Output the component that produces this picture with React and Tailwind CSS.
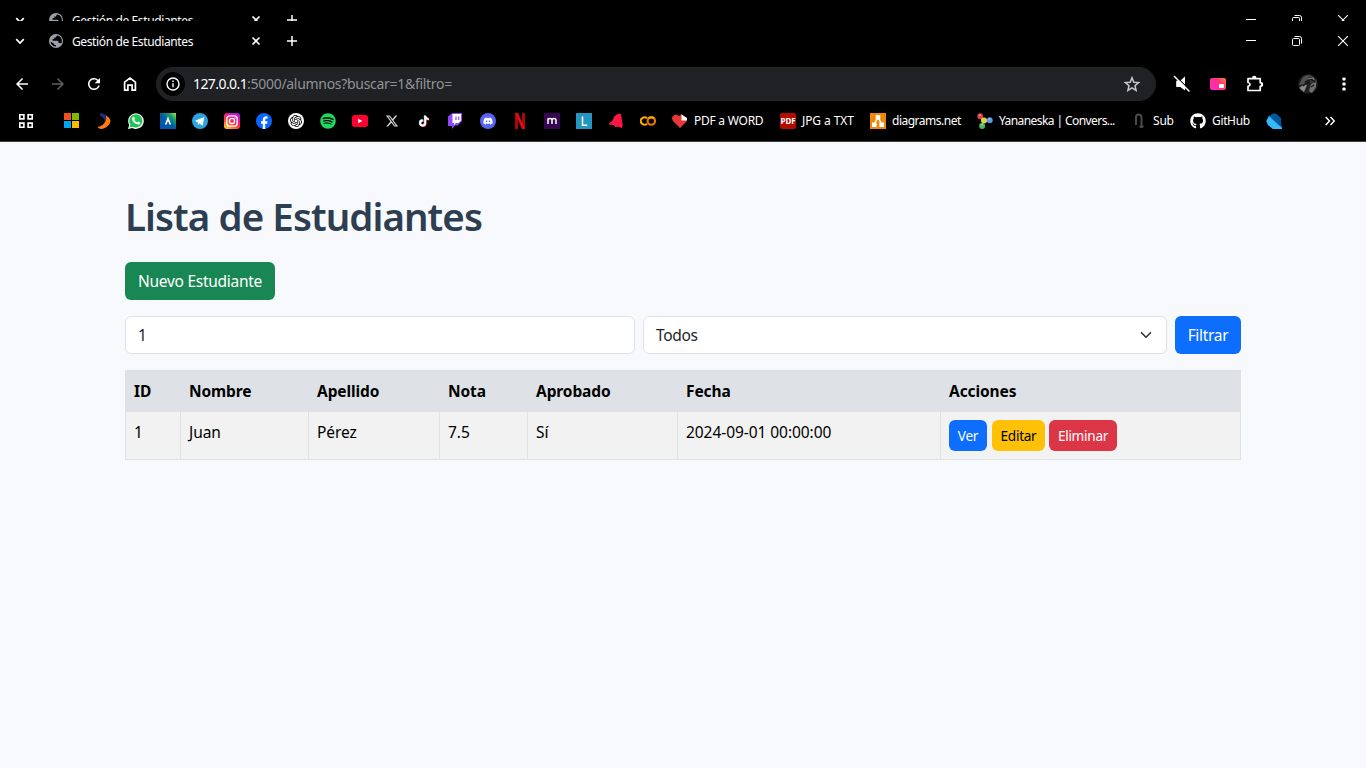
import React from "react";
import { FaSpotify, FaDiscord, FaGithub } from "react-icons/fa";
import { FaXTwitter } from "react-icons/fa6";
import { SiOpenai } from "react-icons/si";
import { MdArrowBack, MdArrowForward, MdRefresh } from "react-icons/md";

function TabStrip() {
  return (
    <div className="flex h-[46px] w-full shrink-0 items-start bg-black text-white">
      <div className="flex h-10 w-full items-center">
        <svg className="ml-[15px] shrink-0" width="10" height="10" viewBox="0 0 10 10" fill="none" stroke="#fff" strokeWidth="1.7"><path d="M1.2 3.2 5 7l3.8-3.8" /></svg>
        <svg className="ml-[24px] shrink-0" width="14" height="14" viewBox="0 0 14 14"><circle cx="7" cy="7" r="7" fill="#9aa0a6" /><path d="M8.500 1.400Q7 2 7 3.400H5.300v1.700H3.600v1.600h4.700q1.200 0 1.200 1.300v1h1.700q.8 0 1.100.6.5-1 .5-2.600a5.700 5.700 0 0 0-4.300-5.600ZM1.500 7.500l3.800 2.600v.9H7v1.600q-4.700 0-5.500-5.100Z" fill="#000" /></svg>
        <span className="ml-[9px] w-[180px] shrink-0 whitespace-nowrap pt-0.5 text-[12px] leading-4 tracking-[-0.38px]">Gestión de Estudiantes</span>
        <svg className="-ml-px shrink-0" width="10" height="10" viewBox="0 0 10 10" stroke="#fff" strokeWidth="1.7"><path d="m1.5 1.5 7 7m0-7-7 7" /></svg>
        <svg className="ml-[26px] shrink-0" width="10" height="10" viewBox="0 0 10 10" stroke="#fff" strokeWidth="1.5"><path d="M5 0v10M0 5h10" /></svg>
        <div className="grow" />
        <svg width="10" height="10" viewBox="0 0 10 10" stroke="#fff"><path d="M0 4.5h10" /></svg>
        <svg className="ml-9" width="10" height="10" viewBox="0 0 10 10" fill="none" stroke="#fff"><rect x=".5" y="2.5" width="7" height="7" rx="1" /><path d="M2.5.5h5q2 0 2 2v5" /></svg>
        <svg className="ml-9 mr-[18px]" width="10" height="10" viewBox="0 0 10 10" stroke="#fff" strokeWidth="1.1"><path d="m0 0 10 10M10 0 0 10" /></svg>
      </div>
    </div>
  );
}

function Toolbar() {
  return (
    <div className="flex h-[34px] shrink-0 items-center">
      <MdArrowBack className="ml-[13px] size-[18px] shrink-0" />
      <MdArrowForward className="ml-[18px] size-[18px] shrink-0 text-[#5f6063]" />
      <MdRefresh className="ml-[18px] size-[18px] shrink-0" />
      <svg className="ml-[18px] shrink-0" width="18" height="18" viewBox="0 0 18 18" fill="none" stroke="#fff" strokeWidth="1.7"><path d="M3.6 15.2V7.1L9 3l5.4 4.1v8.1h-3.3v-5H6.9v5Z" /></svg>
      <div className="ml-[17px] flex h-[34px] w-[1000px] shrink-0 items-center rounded-full bg-[#202124] pl-[5px]">
        <div className="flex size-6 items-center justify-center rounded-full bg-black">
          <svg width="14" height="14" viewBox="0 0 14 14" fill="none" stroke="#fff" strokeWidth="1.4"><circle cx="7" cy="7" r="6" /><path d="M7 6.2v4M7 3.6v1.5" /></svg>
        </div>
        <span className="ml-2 whitespace-nowrap text-[14px] leading-5 tracking-[-0.3px] text-[#8f9398]"><span className="tracking-[-0.58px] text-white">127.0.0.1</span>:5000/alumnos?buscar=1&amp;filtro=</span>
        <svg className="ml-auto mr-[15px]" width="18" height="18" viewBox="0 0 18 18" fill="none" stroke="#c7c8ca" strokeWidth="1.500"><path d="m9 2.800 1.800 4.400 4.800.4-3.600 3.100 1.100 4.700L9 12.900l-4.100 2.500L6 10.700 2.400 7.600l4.800-.4Z" /></svg>
      </div>
      <svg className="ml-[17px] shrink-0" width="18" height="18" viewBox="0 0 18 18" fill="#fff"><path d="M12 1.5v14L7.300 12H3.200V5.800h4.100Z" /><path d="M2.300.7 17.800 16.200" stroke="#000" strokeWidth="1.200" /><path d="m1 1 15.500 15.500" stroke="#fff" strokeWidth="1.500" /></svg>
      <svg className="ml-[19px] shrink-0" width="16" height="12" viewBox="0 0 16 12"><defs><linearGradient id="pip" x1="0" y1=".6" x2="1" y2="0"><stop stopColor="#ff2bbd" /><stop offset=".55" stopColor="#ff347d" /><stop offset="1" stopColor="#fb8b20" /></linearGradient></defs><rect width="16" height="12" rx="2" fill="url(#pip)" /><rect x="9" y="6" width="5" height="4" rx="1" fill="#fff" /></svg>
      <svg className="ml-5 shrink-0" width="18" height="18" viewBox="0 0 18 18"><path d="M2 3.600h12.200v4.100q1.800 0 1.800 1.800t-1.800 1.800v4.200H2v-4.200q2-.3 2-1.900T2 7.500Z" fill="none" stroke="#fff" strokeWidth="1.700" strokeLinejoin="round" /><path d="M6 3a2.200 2.200 0 0 1 4.400 0ZM15 7.200a2 2 0 0 1 0 4.400Z" fill="#fff" /></svg>
      <svg className="ml-[34px] shrink-0" width="20" height="20" viewBox="0 0 20 20"><defs><clipPath id="av"><circle cx="10" cy="10" r="9.800" /></clipPath></defs><g clipPath="url(#av)"><path d="M0 0h20v20H0Z" fill="#202020" /><path d="M5 3q6-4 10 0l3 4-5-2-4 1-3 4-5 1Z" fill="#505050" /><path d="m1 14 6-4 2 1-3 7Z" fill="#8a8a8a" /><path d="m10 3 5-1 4 5-1 5-3 1-1-4-5-1Z" fill="#383838" /><path d="m13 10 5-2v5l-4 6-3-2Z" fill="#6f6f6f" /><path d="m7 8 6-3 4 3M5 12l7-5m1 6 3-2" stroke="#151515" strokeWidth="1.200" fill="none" /><path d="m10 5 5-1 1 2" stroke="#999" strokeWidth=".8" fill="none" /></g></svg>
      <svg className="ml-[24px] shrink-0" width="4" height="14" viewBox="0 0 4 14" fill="#fff"><rect x=".4" y=".4" width="3.2" height="3.2" rx="1.2" /><rect x=".4" y="5.4" width="3.2" height="3.2" rx="1.2" /><rect x=".4" y="10.4" width="3.2" height="3.2" rx="1.2" /></svg>
    </div>
  );
}

function Bookmarks() {
  return (
    <div className="flex h-[41px] shrink-0 items-center border-b border-[#3c3c3f] text-[12px] leading-4">
      <svg className="ml-[19px] shrink-0" width="14" height="14" viewBox="0 0 14 14" fill="none" stroke="#fff" strokeWidth="1.6"><path d="M.8.8h4.1v4.1H.8ZM9.1.8h4.1v4.1H9.1ZM.8 9.1h4.1v4.1H.8ZM9.1 9.1h4.1v4.1H9.1Z" /></svg>
      <div className="ml-[31px] flex shrink-0 items-center gap-4 [&>svg]:size-4 [&>svg]:shrink-0">
        <svg viewBox="0 0 16 16"><path d="M0 0h7v7H0Z" fill="#f25022" /><path d="M8 0h7v7H8Z" fill="#7fba00" /><path d="M0 8h7v7H0Z" fill="#00a4ef" /><path d="M8 8h7v7H8Z" fill="#ffb900" /></svg>
        <svg viewBox="0 0 16 16"><path d="M4 0.500q5-1 7 4l-2.500 4Q8 4 4 3Z" fill="#202d75" /><path d="M10 2.500q6 3.500 4 7.500-2.500 5-8.500 6-3 0-4-2 6-1 8-6 1-2 .5-5.500Z" fill="#ff7a12" /></svg>
        <svg viewBox="0 0 16 16"><path d="m0 16 1.200-4A7.800 7.800 0 1 1 4.300 15Z" fill="#fff" /><path d="m1.500 14.500.8-2.900A6.600 6.600 0 1 1 4.600 13.700Z" fill="#20c455" /><path d="M5 4q1-.5 1.500.5l.5 1.300-.7 1q1 2 3 2.700l1-1 2 .9q.2 1.500-1.300 2C7.800 12 3.500 8 4.200 5Z" fill="#fff" /></svg>
        <svg viewBox="0 0 16 16"><defs><linearGradient id="alura" x1="1" y1="0" x2="0" y2="1"><stop stopColor="#b6e52d" /><stop offset=".25" stopColor="#16a06d" /><stop offset=".5" stopColor="#045d9e" /><stop offset="1" stopColor="#0550b7" /></linearGradient></defs><path d="M0 0h16v16H0Z" fill="url(#alura)" /><path d="m5.700 11.500 2.300-6 2.300 6" fill="none" stroke="#fff" strokeWidth="1.700" /></svg>
        <svg viewBox="0 0 16 16"><circle cx="8" cy="8" r="8" fill="#2ba3df" /><path d="m3 7.800 9.300-3.700-1.600 8.600-3.300-2.200-1.500 1.400-.3-2.700 1.500-1L4.700 9Z" fill="#fff" /></svg>
        <svg viewBox="0 0 16 16"><defs><linearGradient id="insta" x1=".2" y1="1" x2=".8" y2="0"><stop stopColor="#ffcf38" /><stop offset=".35" stopColor="#ff452f" /><stop offset=".65" stopColor="#f0148b" /><stop offset="1" stopColor="#ac1cee" /></linearGradient></defs><rect width="16" height="16" rx="3" fill="url(#insta)" /><g fill="none" stroke="#fff" strokeWidth="1.300"><rect x="2.800" y="2.800" width="10.400" height="10.400" rx="3" /><circle cx="8" cy="8" r="2.600" /></g><circle cx="11.100" cy="4.900" r=".7" fill="#fff" /></svg>
        <svg viewBox="0 0 16 16"><circle cx="8" cy="8" r="8" fill="#0866ff" /><path d="M6.800 16v-5.300H5V8.200h1.800V7q0-3.700 3.500-3.700l1.300.1v2.200h-.9q-1.500 0-1.500 1.400v1.200h2.300l-.4 2.500H9.200V16Z" fill="#fff" /></svg>
        <div className="flex size-4 items-center justify-center rounded-full bg-white text-black"><SiOpenai className="size-3" /></div>
        <FaSpotify className="text-[#1ed760]" />
        <svg viewBox="0 0 16 16"><rect y="2" width="16" height="12" rx="2.500" fill="#ff0033" /><path d="M6.200 5.700v4.600l4.100-2.300Z" fill="#fff" /></svg>
        <FaXTwitter className="scale-[.85] text-[#d8d8d8]" />
        <svg viewBox="0 0 448 512"><g transform="translate(72 84) scale(.68)"><path transform="translate(-22 -20)" fill="#25f4ee" d="M448 209.900a210 210 0 0 1-122.800-39.300v178.800A162.600 162.600 0 1 1 185 188.300v89.900a74.600 74.600 0 1 0 52.200 71.200V0h88a121 121 0 0 0 1.900 22.200A122 122 0 0 0 381 102.400a121 121 0 0 0 67 20.100Z" /><path transform="translate(22 20)" fill="#fe2c55" d="M448 209.900a210 210 0 0 1-122.800-39.300v178.800A162.600 162.600 0 1 1 185 188.300v89.900a74.600 74.600 0 1 0 52.200 71.200V0h88a121 121 0 0 0 1.900 22.200A122 122 0 0 0 381 102.400a121 121 0 0 0 67 20.100Z" /><path fill="#fff" d="M448 209.900a210 210 0 0 1-122.800-39.300v178.800A162.600 162.600 0 1 1 185 188.300v89.900a74.600 74.600 0 1 0 52.200 71.200V0h88a121 121 0 0 0 1.900 22.200A122 122 0 0 0 381 102.400a121 121 0 0 0 67 20.100Z" /></g></svg>
        <svg viewBox="0 0 16 16"><path d="M4.500 0H14v8l-4.500 4.500H7L4 16v-3H0V3.500Z" fill="#9146ff" /><path d="M4.500 1H13v6.500L10.500 10H8l-2 2v-2H4.500Z" fill="#fff" /><path d="M8 3.500V7M10.800 3.500V7" stroke="#9146ff" strokeWidth="1.200" /></svg>
        <div className="flex size-4 items-center justify-center rounded-full bg-[#5865f2]"><FaDiscord className="size-[10px]" /></div>
        <svg viewBox="0 0 16 16"><path d="M3 0h3v16H3ZM10 0h3v16h-3Z" fill="#a9070f" /><path d="M3 0h3l7 16h-3Z" fill="#e50914" /></svg>
        <svg viewBox="0 0 16 16"><path d="M0 0h16v16H0Z" fill="#35084f" /><path d="M4 11V5.200M4 7.500q0-2.100 2-2.100t2 2V11m0-3.500q0-2.100 2-2.100t2 2V11" stroke="#fff" strokeWidth="1.500" fill="none" /></svg>
        <svg viewBox="0 0 16 16"><path d="M0 0h16v16H0Z" fill="#2496bf" /><path d="M6.500 3.500v8.700h4.700" stroke="#fff" strokeWidth="1.500" fill="none" /></svg>
        <svg viewBox="0 0 16 16"><path d="M6 4q2-3 5-3.500l2 .5.500 3 .8 6 .5 2.500-1 2.500-4-1.500-2 1-2-2.500-5-.5 0-1q4-2 5.200-6.500" fill="#ff1744" /></svg>
        <svg viewBox="0 0 16 16" fill="none" strokeWidth="2.200"><circle cx="11.300" cy="8" r="3.700" stroke="#e8710a" /><path d="M7 5.300a3.700 3.700 0 1 0 0 5.400" stroke="#f9ab00" /><path d="M8.700 5.400a3.700 3.700 0 0 1 5.200 0" stroke="#f9ab00" /></svg>
        <svg viewBox="0 0 16 16"><path d="M8 15 1 8q-2-3 0-5 3-3 6 0l3-2 2 3 3 4Z" fill="#e53935" /><path d="M9.500 1.500v6H15V5Z" fill="#fff" /></svg>
      </div>
      <span className="ml-1.5 w-[86px] shrink-0 whitespace-nowrap tracking-[-0.25px]">PDF a WORD</span>
      <div className="flex size-4 shrink-0 items-center justify-center rounded-[2px] bg-[#b30b00] text-[8px] font-bold tracking-[-0.1px]">PDF</div>
      <span className="ml-1.5 w-[68px] shrink-0 whitespace-nowrap tracking-[-0.1px]">JPG a TXT</span>
      <svg className="size-4 shrink-0" viewBox="0 0 16 16"><path d="M0 0h16v16H0Z" fill="#f08705" /><path d="m8 4-4 8M8 4l4 8" stroke="#fff" strokeWidth="1.500" /><path d="M5.700 2h4.600v4.500H5.700ZM2 9.500h4.600V14H2ZM9.400 9.500H14V14H9.400Z" fill="#fff" /></svg>
      <span className="ml-1.5 w-[85px] shrink-0 whitespace-nowrap tracking-[-0.5px]">diagrams.net</span>
      <svg className="size-4 shrink-0" viewBox="0 0 16 16"><path d="m3 3 3.500 5 7-1M6.500 8 5 13" stroke="#bda" strokeWidth="2" fill="none" /><circle cx="3.200" cy="3.200" r="2.900" fill="#df403d" /><circle cx="7" cy="7.500" r="3" fill="#ddd347" /><circle cx="12.800" cy="7.200" r="2.900" fill="#5a98e5" /><circle cx="5.100" cy="12.900" r="3" fill="#50b75b" /><path d="M2 2.200h2M11.500 6h2M4 11.800h2" stroke="#fff" strokeOpacity=".6" /></svg>
      <span className="ml-1.5 w-[132px] shrink-0 whitespace-nowrap tracking-[-0.58px]">Yananeska | Convers...</span>
      <svg className="size-4 shrink-0" viewBox="0 0 16 16" fill="none" stroke="#4a4a4d" strokeWidth="2"><path d="M5 12V4q0-2.500 2.500-2.500T10.500 4v11M8.500 13.500h4" /></svg>
      <span className="ml-1.5 w-[37px] shrink-0 tracking-[-0.2px]">Sub</span>
      <FaGithub className="size-4 shrink-0" />
      <span className="ml-1.5 w-[54px] shrink-0 tracking-[-0.35px]">GitHub</span>
      <svg className="size-4 shrink-0" viewBox="0 0 16 16"><path d="m3 3 4-2.500h3l5 4.500v7l1 1v3H7l-6-5-1-3Z" fill="#01579b" /><path d="m3 3 13 12v1H7L2 12 .5 8Z" fill="#35baf6" /></svg>
      <svg className="ml-[43px] shrink-0" width="10" height="10" viewBox="0 0 10 10" fill="none" stroke="#fff" strokeWidth="1.500"><path d="m.7 1 3.800 4L.7 9M5.500 1l3.800 4-3.800 4" /></svg>
    </div>
  );
}

const columns = ["ID", "Nombre", "Apellido", "Nota", "Aprobado", "Fecha", "Acciones"];
const student = ["1", "Juan", "Pérez", "7.5", "Sí", "2024-09-01 00:00:00"];

export default function App() {
  return (
    <div className="flex h-[768px] w-[1366px] flex-col overflow-hidden bg-[#f8f9fd] font-['Noto_Sans','Open_Sans',sans-serif]">
      <header className="flex h-[142px] shrink-0 flex-col bg-black text-white">
        <div className="h-[21px] shrink-0 overflow-hidden"><TabStrip /></div>
        <TabStrip />
        <Toolbar />
        <Bookmarks />
      </header>
      <main className="mx-auto w-[1116px] pt-[50px] text-[15.5px] leading-6 text-[#212529]">
        <h1 className="whitespace-nowrap text-[38.5px] font-[560] leading-[48px] tracking-[-0.93px] text-[#2c3e50]">Lista de Estudiantes</h1>
        <button className="mt-[22px] flex h-[38px] w-[150px] items-center justify-center whitespace-nowrap rounded-md bg-[#198754] tracking-[-0.27px] text-white">Nuevo Estudiante</button>
        <form className="mt-4 flex gap-2">
          <div className="flex h-[38px] w-[510px] items-center rounded-md border border-[#dee2e6] bg-white px-3">1</div>
          <div className="flex h-[38px] w-[524px] items-center justify-between rounded-md border border-[#dee2e6] bg-white pl-3 pr-[14px]">
            <span className="tracking-[-0.3px]">Todos</span>
            <svg width="12" height="12" viewBox="0 0 16 16" fill="none" stroke="#343a40" strokeWidth="2.2" strokeLinecap="round" strokeLinejoin="round"><path d="m2 5 6 6 6-6" /></svg>
          </div>
          <button type="button" className="h-[38px] w-[66px] rounded-md bg-[#0d6efd] tracking-[-0.3px] text-white">Filtrar</button>
        </form>
        <table className="mt-4 w-[1116px] table-fixed border-separate border-spacing-0 text-black">
          <colgroup>
            <col className="w-[56px]" /><col className="w-[128px]" /><col className="w-[131px]" /><col className="w-[88px]" /><col className="w-[150px]" /><col className="w-[263px]" /><col className="w-[300px]" />
          </colgroup>
          <thead>
            <tr className="h-[42px] bg-[#dee2e6]">
              {columns.map((c) => (
                <th key={c} className="whitespace-nowrap px-2 py-0 text-left font-bold tracking-[-0.1px] first:pl-[9px]">{c}</th>
              ))}
            </tr>
          </thead>
          <tbody>
            <tr className="h-12 bg-[#f2f2f2] align-top">
              {student.map((v) => (
                <td key={v} className="whitespace-nowrap border-b border-r border-[#dee2e6] px-2 pb-0 pt-2 tracking-[-0.06px] first:border-l">{v}</td>
              ))}
              <td className="border-b border-r border-[#dee2e6] px-2 pb-0 pt-2">
                <div className="flex gap-1 text-[13.6px] leading-[21px] tracking-[-0.28px]">
                  <button className="mr-px h-[31px] w-[38px] rounded-md bg-[#0d6efd] text-white">Ver</button>
                  <button className="h-[31px] w-[53px] rounded-md bg-[#ffc107] text-black">Editar</button>
                  <button className="h-[31px] w-[68px] rounded-md bg-[#dc3545] text-white">Eliminar</button>
                </div>
              </td>
            </tr>
          </tbody>
        </table>
      </main>
    </div>
  );
}
